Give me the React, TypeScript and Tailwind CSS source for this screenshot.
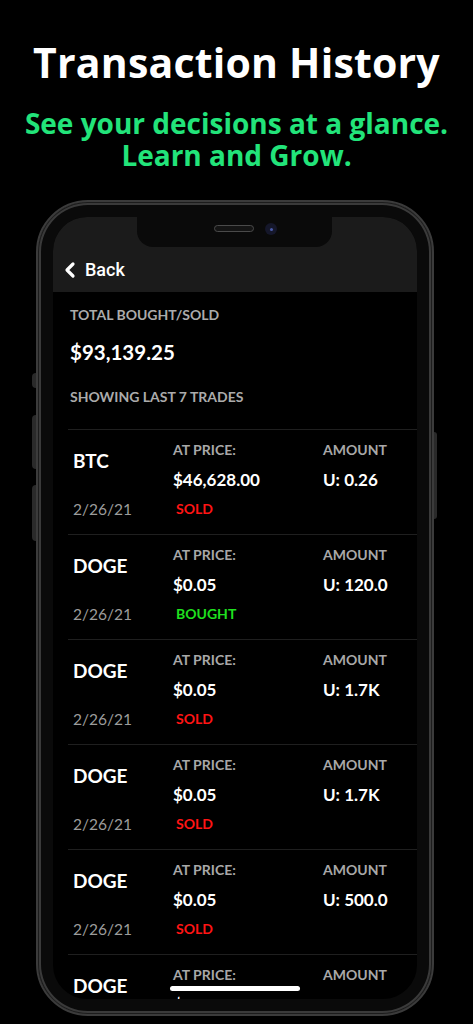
import { ChevronLeft } from "lucide-react"

const trades = [
  { symbol: "BTC", price: "$46,628.00", amount: "U: 0.26", date: "2/26/21", side: "SOLD" },
  { symbol: "DOGE", price: "$0.05", amount: "U: 120.0", date: "2/26/21", side: "BOUGHT" },
  { symbol: "DOGE", price: "$0.05", amount: "U: 1.7K", date: "2/26/21", side: "SOLD" },
  { symbol: "DOGE", price: "$0.05", amount: "U: 1.7K", date: "2/26/21", side: "SOLD" },
  { symbol: "DOGE", price: "$0.05", amount: "U: 500.0", date: "2/26/21", side: "SOLD" },
  { symbol: "DOGE", price: "$0.07", amount: "U: 1.2K", date: "2/26/21", side: "SOLD" },
]

export default function App() {
  return (
    <div className="w-[473px] h-[1024px] bg-black overflow-hidden font-['Open_Sans',sans-serif]">
      {/* Header */}
      <div className="pt-[38px] text-center">
        <h1 className="text-white font-bold text-[41px] leading-[48px] tracking-[0.2px]">Transaction History</h1>
        <p className="mt-[21px] text-[#22e47a] font-bold text-[28px] leading-[32px]">
          See your decisions at a glance.
          <br />
          Learn and Grow.
        </p>
      </div>

      {/* Phone */}
      <div className="relative mt-[29px] ml-[36px] w-[398px] h-[816px] rounded-[52px] border-2 border-[#3b3b3b] bg-[#0a0a0a] p-[15px] shadow-[inset_0_0_0_1px_#1c1c1c,inset_0_0_0_3px_#3a3a3a]">
        {/* side buttons */}
        <div className="absolute -left-[6px] top-[171px] w-[4px] h-[15px] rounded-l-sm bg-[#2a2a2a]" />
        <div className="absolute -left-[6px] top-[213px] w-[4px] h-[54px] rounded-l-sm bg-[#2a2a2a]" />
        <div className="absolute -left-[6px] top-[283px] w-[4px] h-[56px] rounded-l-sm bg-[#2a2a2a]" />
        <div className="absolute -right-[5px] top-[230px] w-[3px] h-[87px] rounded-r-sm bg-[#2a2a2a]" />

        <Screen />
      </div>
    </div>
  )
}

function Screen() {
  return (
    <div className="relative h-full rounded-[34px] overflow-hidden bg-black font-['Lato',sans-serif]">
      {/* Notch */}
      <div className="absolute left-[84px] top-0 w-[195px] h-[30px] bg-[#0a0a0a] rounded-b-[16px] z-10">
        <div className="absolute left-[77px] top-[8px] w-[40px] h-[7px] rounded-full border border-[#4a4a4a] bg-[#141414]" />
        <div className="absolute left-[128px] top-[6px] w-[12px] h-[12px] rounded-full bg-[#15172a] flex items-center justify-center">
          <div className="w-[3px] h-[3px] rounded-full bg-[#4a5aa8]" />
        </div>
      </div>

      {/* Nav bar */}
      <div className="h-[75px] bg-[#1b1b1b] pt-[42px] pl-[5px]">
        <div className="flex items-center h-[22px] text-white">
          <ChevronLeft className="w-[24px] h-[26px]" strokeWidth={3.2} />
          <span className="ml-[3px] text-[18px] font-['Roboto',sans-serif] font-medium leading-none">Back</span>
        </div>
      </div>

      {/* Summary */}
      <div className="pl-[17px] pt-[14px]">
        <div className="text-[#ababab] font-bold text-[14px] leading-[18px]">TOTAL BOUGHT/SOLD</div>
        <div className="mt-[16px] text-white font-bold text-[20.5px] leading-[24px]">$93,139.25</div>
        <div className="mt-[24px] text-[#ababab] font-bold text-[14px] leading-[18px]">SHOWING LAST 7 TRADES</div>
      </div>

      {/* Trades */}
      <div className="ml-[15px] mt-[23px]">
        {trades.map((t, i) => (
          <div
            key={i}
            className="h-[105px] border-t border-[#1f1f1f] pl-[5px] pt-[10px] grid grid-cols-[100px_150px_1fr] grid-rows-[20px_20px_20px] gap-y-[9.5px]"
          >
            <div className="row-span-2 self-center mb-[8px] text-white font-bold text-[19px] leading-[24px]">{t.symbol}</div>
            <div className="text-[#a8a8a8] font-bold text-[14px] leading-[20px]">AT PRICE:</div>
            <div className="text-[#a8a8a8] font-bold text-[14px] leading-[20px]">AMOUNT</div>
            <div className="text-white font-bold text-[17px] leading-[20px]">{t.price}</div>
            <div className="text-white font-bold text-[17px] leading-[20px]">{t.amount}</div>
            <div className="text-[#9c9c9c] text-[15.5px] leading-[20px]">{t.date}</div>
            <div
              className={`pl-[3px] font-bold text-[14px] leading-[20px] ${t.side === "SOLD" ? "text-[#ff1414]" : "text-[#1fe01f]"}`}
            >
              {t.side}
            </div>
            <div />
          </div>
        ))}
      </div>

      {/* Home indicator */}
      <div className="absolute bottom-[8px] left-[117px] w-[130px] h-[5px] rounded-full bg-white" />
    </div>
  )
}
